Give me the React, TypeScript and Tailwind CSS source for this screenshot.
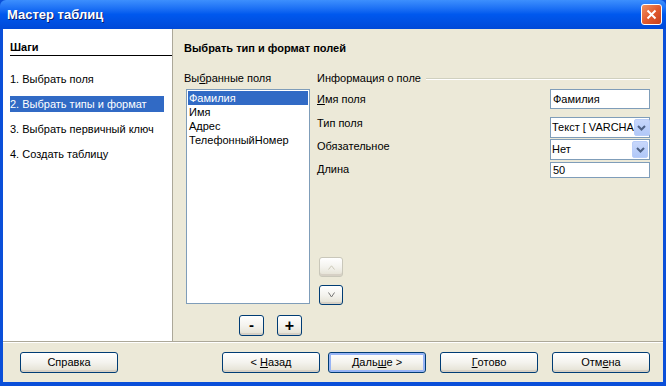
import React from "react";

const font = "font-['Liberation_Sans',sans-serif]";

function XpButton({
  children,
  className = "",
  isDefault = false,
  disabled = false,
}: {
  children: React.ReactNode;
  className?: string;
  isDefault?: boolean;
  disabled?: boolean;
}) {
  return (
    <div
      className={`flex items-center justify-center whitespace-nowrap rounded-[3px] border ${
        disabled ? "border-[#c9c7ba] text-[#aca899]" : "border-[#003c74] text-black"
      } bg-gradient-to-b from-white via-[#f4f3ee] to-[#e3e0d2] ${
        isDefault ? "shadow-[inset_0_0_0_2px_#97b4f5]" : "shadow-[inset_0_-2px_0_#d6d0c5]"
      } ${className}`}
    >
      {children}
    </div>
  );
}

function DropArrow() {
  return (
    <div className="mr-[1px] flex h-[17px] w-[16px] shrink-0 items-center justify-center rounded-[2px] bg-gradient-to-b from-[#c7d7fb] to-[#b1c8f8] border border-[#b9cdf8]">
      <svg width="9" height="6" viewBox="0 0 9 6">
        <path d="M1 1 L4.5 4.5 L8 1" stroke="#4d6185" strokeWidth="2" fill="none" />
      </svg>
    </div>
  );
}

export default function App() {
  const steps = [
    "1. Выбрать поля",
    "2. Выбрать типы и формат",
    "3. Выбрать первичный ключ",
    "4. Создать таблицу",
  ];

  return (
    <div className={`w-[666px] h-[386px] flex flex-col bg-[#0a4fd9] text-[11px] ${font} overflow-hidden`}>
      {/* title bar */}
      <div className="h-[29px] flex items-center justify-between rounded-t-[6px] bg-gradient-to-b from-[#3d8ffd] via-[#0058ee] to-[#0049d8] pl-[7px] pr-[4px]">
        <span className="text-[13px] font-bold text-white [text-shadow:1px_1px_0_#0a1e6e]">
          Мастер таблиц
        </span>
        <div className="w-[21px] h-[21px] rounded-[3px] border border-white bg-gradient-to-br from-[#f0915f] via-[#e25b2f] to-[#c7401c] flex items-center justify-center">
          <svg width="11" height="11" viewBox="0 0 11 11">
            <path d="M1.5 1.5 L9.5 9.5 M9.5 1.5 L1.5 9.5" stroke="white" strokeWidth="2" />
          </svg>
        </div>
      </div>

      {/* body */}
      <div className="flex-1 flex flex-col mx-[3px] mb-[4px] bg-[#ece9d8]">
        <div className="h-[312px] flex">
          {/* steps panel */}
          <div className="w-[170px] bg-white border-r border-[#aca899] pl-[7px] pt-[12px]">
            <div className="font-bold pb-[1px] border-b border-black leading-[13px]">Шаги</div>
            <div className="mt-[15px] flex flex-col gap-[9px]">
              {steps.map((s, i) => (
                <div
                  key={s}
                  className={`h-[16px] w-[154px] whitespace-nowrap leading-[16px] ${i === 1 ? "bg-[#316ac5] text-white" : ""}`}
                >
                  {s}
                </div>
              ))}
            </div>
          </div>

          {/* main panel */}
          <div className="flex-1 pl-[11px] pt-[13px]">
            <div className="font-bold leading-[13px]">Выбрать тип и формат полей</div>
            <div className="mt-[17px] flex">
              {/* selected fields */}
              <div className="w-[126px]">
                <div className="leading-[13px]">
                  Вы<span className="underline">б</span>ранные поля
                </div>
                <div className="ml-[2px] mt-[4px] w-[124px] h-[215px] border border-[#7f9db9] bg-white p-[1px]">
                  {["Фамилия", "Имя", "Адрес", "ТелефонныйНомер"].map((f, i) => (
                    <div
                      key={f}
                      className={`h-[14px] leading-[14px] pl-[1px] ${i === 0 ? "bg-[#316ac5] text-white" : ""}`}
                    >
                      {f}
                    </div>
                  ))}
                </div>
                <div className="mt-[11px] ml-[55px] flex gap-[13px]">
                  <XpButton className="w-[25px] h-[21px] font-bold text-[15px]">-</XpButton>
                  <XpButton className="w-[25px] h-[21px] font-bold text-[16px]">+</XpButton>
                </div>
              </div>

              {/* field info */}
              <div className="ml-[7px] w-[333px]">
                <div className="flex items-center h-[13px]">
                  <span className="leading-[13px]">Информация о поле</span>
                  <div className="ml-[5px] flex-1 border-t border-[#d0d0bf] border-b border-b-white" />
                </div>

                <div className="mt-[4px] flex justify-between">
                  <span className="pt-[4px] leading-[13px]">
                    <span className="underline">И</span>мя поля
                  </span>
                  <div className="w-[100px] h-[20px] border border-[#7f9db9] bg-white pl-[2px] flex items-center">
                    Фамилия
                  </div>
                </div>

                <div className="mt-[8px] flex justify-between">
                  <span className="leading-[13px]">Тип поля</span>
                  <div className="w-[100px] h-[21px] border border-[#7f9db9] bg-white pl-[1px] flex items-center justify-between">
                    <span className="whitespace-nowrap">Текст [ VARCHA</span>
                    <DropArrow />
                  </div>
                </div>

                <div className="mt-[1px] flex justify-between">
                  <span className="pt-[1px] leading-[13px]">Обязательное</span>
                  <div className="w-[100px] h-[21px] border border-[#7f9db9] bg-white pl-[1px] flex items-center justify-between">
                    <span>Нет</span>
                    <DropArrow />
                  </div>
                </div>

                <div className="mt-[2px] flex justify-between">
                  <span className="pt-[1px] leading-[13px]">Длина</span>
                  <div className="w-[100px] h-[16px] border border-[#7f9db9] bg-white pl-[2px] flex items-center">
                    50
                  </div>
                </div>

                <div className="ml-[2px] mt-[79px] flex flex-col gap-[8px]">
                  <XpButton disabled className="w-[24px] h-[20px]">
                    <svg width="7" height="5" viewBox="0 0 7 5">
                      <path d="M0.5 4.5 L3.5 0.8 L6.5 4.5" stroke="#cbc8b8" strokeWidth="1" fill="none" />
                    </svg>
                  </XpButton>
                  <XpButton className="w-[24px] h-[20px]">
                    <svg width="7" height="6" viewBox="0 0 7 6">
                      <path d="M0.5 0.5 L3.5 5 L6.5 0.5" stroke="#777" strokeWidth="1" fill="none" />
                    </svg>
                  </XpButton>
                </div>
              </div>
            </div>
          </div>
        </div>

        {/* separator */}
        <div className="border-t border-[#aca899] border-b border-b-white" />

        {/* bottom buttons */}
        <div className="flex pt-[9px] pl-[17px]">
          <XpButton className="w-[98px] h-[21px]">Справка</XpButton>
          <XpButton className="ml-[104px] w-[98px] h-[21px]">
            &lt;<span className="underline ml-[3px]">Н</span>азад
          </XpButton>
          <XpButton isDefault className="ml-[8px] w-[98px] h-[21px]">
            Даль<span className="underline">ш</span>е &gt;
          </XpButton>
          <XpButton className="ml-[14px] w-[98px] h-[21px]">
            <span className="underline">Г</span>отово
          </XpButton>
          <XpButton className="ml-[14px] w-[98px] h-[21px]">
            Отм<span className="underline">е</span>на
          </XpButton>
        </div>
      </div>
    </div>
  );
}
